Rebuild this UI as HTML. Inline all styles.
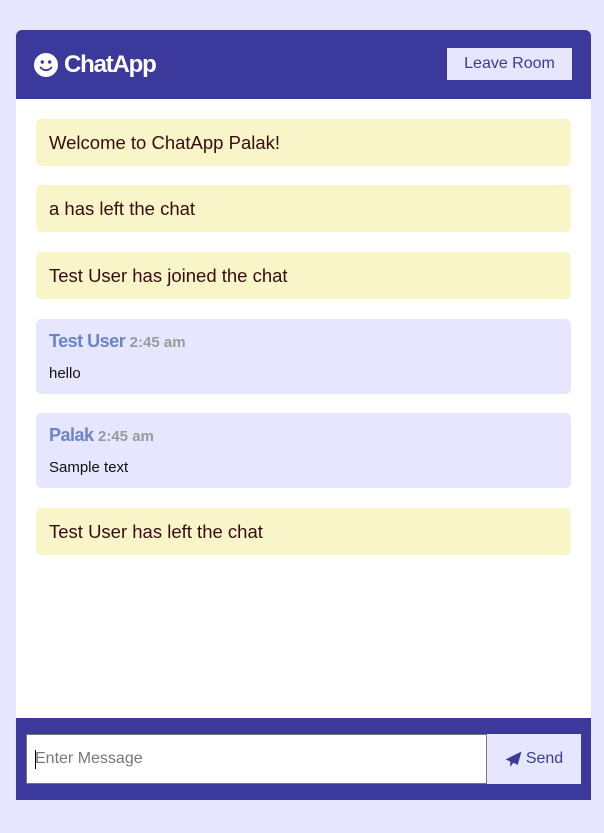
<!DOCTYPE html>
<html><head><meta charset="utf-8"><style>
*{box-sizing:border-box;margin:0;padding:0}
body{width:604px;height:833px;background:#e6e7fe;font-family:"Liberation Sans",sans-serif;position:relative;overflow:hidden}
.c{position:absolute;left:16px;top:30px;width:575px;height:770px;background:#fff;border-radius:6px 6px 0 0;overflow:hidden}
.h{position:absolute;left:0;top:0;width:575px;height:69px;background:#3b3a9c}
.logo{position:absolute;left:18px;top:21px;color:#fff;font-weight:bold;font-size:24px;display:flex;align-items:center;gap:6px;letter-spacing:-1.2px}
.lb{position:absolute;left:431px;top:18px;width:125px;height:32px;background:#e6e7fe;color:#3b3a9c;font-size:16px;text-align:center;line-height:32px}
.m{position:absolute;left:20px;width:535px;border-radius:5px}
.y{background:#f8f6c8;height:47px;line-height:47px;padding-left:13px;font-size:18.5px;color:#3a0a10}
.b{background:#e6e7fe;height:75px;padding:12px 13px}
.n{color:#6b84c9;font-weight:bold;font-size:18px;letter-spacing:-0.5px}
.t{color:#999;font-size:15px;font-weight:bold}
.tx{font-size:15px;margin-top:13px;color:#111}
.f{position:absolute;left:0;top:688px;width:575px;height:82px;background:#3b3a9c}
.in{position:absolute;left:10px;top:16px;width:461px;height:50px;background:#fff;border:1px solid #777;font-size:16px;color:#777;padding-left:8px;line-height:48px}
.in:before{content:"";position:absolute;left:8px;top:15px;width:1px;height:19px;background:#000}
.s{position:absolute;left:471px;top:16px;width:94px;height:50px;background:#e6e7fe;color:#3b3a9c;font-size:16px;display:flex;align-items:center;justify-content:center;gap:4px}
</style></head><body>
<div class="c">
<div class="h">
<div class="logo"><svg width="24" height="24" viewBox="0 0 24 24"><circle cx="12" cy="12" r="12" fill="#fff"/><circle cx="8.3" cy="9" r="1.7" fill="#3b3a9c"/><circle cx="15.7" cy="9" r="1.7" fill="#3b3a9c"/><path d="M6.5 14.5 Q12 20 17.5 14.5" stroke="#3b3a9c" stroke-width="1.8" fill="none" stroke-linecap="round"/></svg>ChatApp</div>
<div class="lb">Leave Room</div>
</div>
<div class="m y" style="top:89px">Welcome to ChatApp Palak!</div>
<div class="m y" style="top:155px">a has left the chat</div>
<div class="m y" style="top:222px">Test User has joined the chat</div>
<div class="m b" style="top:289px"><span class="n">Test User</span> <span class="t">2:45 am</span><div class="tx">hello</div></div>
<div class="m b" style="top:383px"><span class="n">Palak</span> <span class="t">2:45 am</span><div class="tx">Sample text</div></div>
<div class="m y" style="top:478px">Test User has left the chat</div>
<div class="f">
<div class="in">Enter Message</div>
<div class="s"><svg width="17" height="17" viewBox="0 0 16 16"><path d="M15.5 0.5 L0.5 8 L5 9.8 L5 15 L7.8 11 L12 13 Z" fill="#3b3a9c"/></svg>Send</div>
</div>
</div>
</body></html>
